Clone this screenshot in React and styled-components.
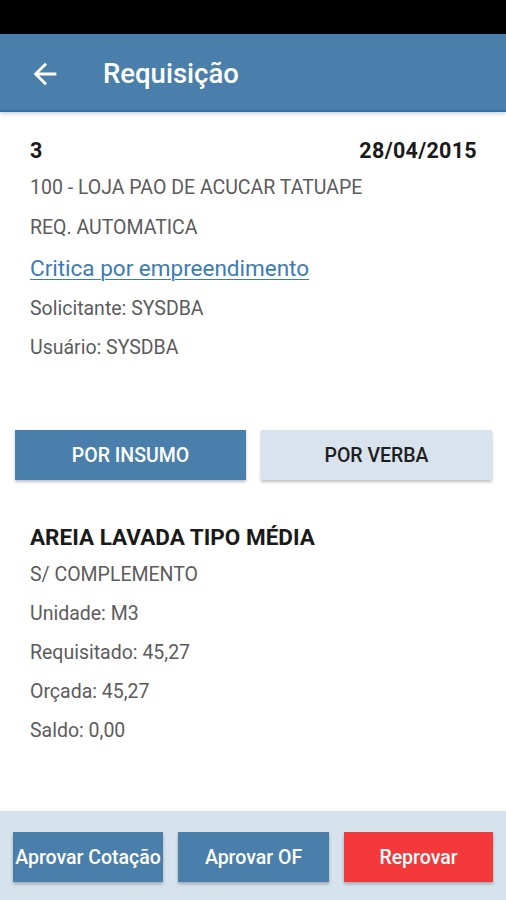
import React from 'react'
import styled, { createGlobalStyle } from 'styled-components';

const Global = createGlobalStyle`
    html, body {
        margin: 0;
        padding: 0;
        background: #ffffff;
        font-family: Roboto, "Noto Sans", "Liberation Sans", sans-serif;
    }
`;

const Screen = styled.div`
    width: 506px;
    height: 900px;
    display: flex;
    flex-direction: column;
    background: #ffffff;
    overflow: hidden;
`;
const StatusBar = styled.div`
    height: 34px;
    background: #000000;
    flex-shrink: 0;
`;
const AppBar = styled.div`
    height: 76px;
    box-sizing: border-box;
    padding: 4px 0 0 28px;
    flex-shrink: 0;
    background: #4a7fac;
    border-bottom: 2px solid #3570a0;
    box-shadow: 0 2px 4px rgba(0,0,0,0.18);
    display: flex;
    align-items: center;
    gap: 41px;
    position: relative;
    z-index: 1;
    height: 78px;
`;
const BackIcon = styled.svg`
    width: 34px;
    height: 34px;
    fill: #ffffff;
`;
const Title = styled.div`
    font-size: 27.5px;
    font-weight: 500;
    color: #ffffff;
    padding-bottom: 2px;
`;
const Content = styled.div`
    flex: 1;
    display: flex;
    flex-direction: column;
`;
const Header = styled.div`
    padding: 21px 29px 0 30px;
    display: flex;
    flex-direction: column;
`;
const TopRow = styled.div`
    height: 34px;
    display: flex;
    justify-content: space-between;
    align-items: center;
    font-size: 21.5px;
    letter-spacing: 0.3px;
    font-weight: 700;
    color: #1a1a1a;
`;
const Line = styled.div`
    height: ${({h}) => h || 40}px;
    display: flex;
    align-items: center;
    font-size: 19.5px;
    color: #5c5c5c;
`;
const Link = styled.a`
    font-size: 22.5px;
    color: #3b7bb6;
    text-decoration: underline;
    text-underline-offset: 3px;
    text-decoration-thickness: 1px;
`;
const Tabs = styled.div`
    margin-top: 63px;
    padding: 0 14px 0 15px;
    display: grid;
    grid-template-columns: 1fr 1fr;
    gap: 15px;
`;
const Tab = styled.div`
    height: 50px;
    display: flex;
    align-items: center;
    justify-content: center;
    font-size: 19.5px;
    font-weight: 500;
    background: ${({active}) => active ? '#4a7fac' : '#d8e3ed'};
    color: ${({active}) => active ? '#ffffff' : '#1e1e1e'};
    box-shadow: 0 2px 3px rgba(0,0,0,0.25);
`;
const Item = styled.div`
    padding: 39px 30px 0 30px;
    display: flex;
    flex-direction: column;
`;
const ItemTitle = styled.div`
    height: 36px;
    display: flex;
    align-items: center;
    font-size: 22.5px;
    font-weight: 700;
    color: #1a1a1a;
`;
const Footer = styled.div`
    height: 89px;
    flex-shrink: 0;
    background: #d6e2ec;
    display: grid;
    grid-template-columns: 150px 151px 149px;
    gap: 15px;
    padding: 21px 13px 0 13px;
    box-sizing: border-box;
`;
const Action = styled.div`
    height: 50px;
    display: flex;
    align-items: center;
    justify-content: center;
    font-size: 19.5px;
    font-weight: 500;
    color: #ffffff;
    white-space: nowrap;
    overflow: hidden;
    background: ${({danger}) => danger ? '#f3393c' : '#4a7fac'};
    box-shadow: 0 2px 3px rgba(0,0,0,0.25);
`;

const App = () => {
  return (
    <Screen>
      <Global/>
      <StatusBar/>
      <AppBar>
        <BackIcon viewBox="0 0 24 24">
          <path d="M20 11H7.83l5.59-5.59L12 4l-8 8 8 8 1.41-1.41L7.83 13H20v-2z"/>
        </BackIcon>
        <Title>Requisição</Title>
      </AppBar>
      <Content>
        <Header>
          <TopRow>
            <span>3</span>
            <span>28/04/2015</span>
          </TopRow>
          <Line>100 - LOJA PAO DE ACUCAR TATUAPE</Line>
          <Line>REQ. AUTOMATICA</Line>
          <Line h={42}><Link>Critica por empreendimento</Link></Line>
          <Line h={38}>Solicitante: SYSDBA</Line>
          <Line>Usuário: SYSDBA</Line>
        </Header>
        <Tabs>
          <Tab active>POR INSUMO</Tab>
          <Tab>POR VERBA</Tab>
        </Tabs>
        <Item>
          <ItemTitle>AREIA LAVADA TIPO MÉDIA</ItemTitle>
          <Line h={39}>S/ COMPLEMENTO</Line>
          <Line h={39}>Unidade: M3</Line>
          <Line h={39}>Requisitado: 45,27</Line>
          <Line h={39}>Orçada: 45,27</Line>
          <Line h={39}>Saldo: 0,00</Line>
        </Item>
      </Content>
      <Footer>
        <Action>Aprovar Cotação</Action>
        <Action>Aprovar OF</Action>
        <Action danger>Reprovar</Action>
      </Footer>
    </Screen>
  )
}

export default App
